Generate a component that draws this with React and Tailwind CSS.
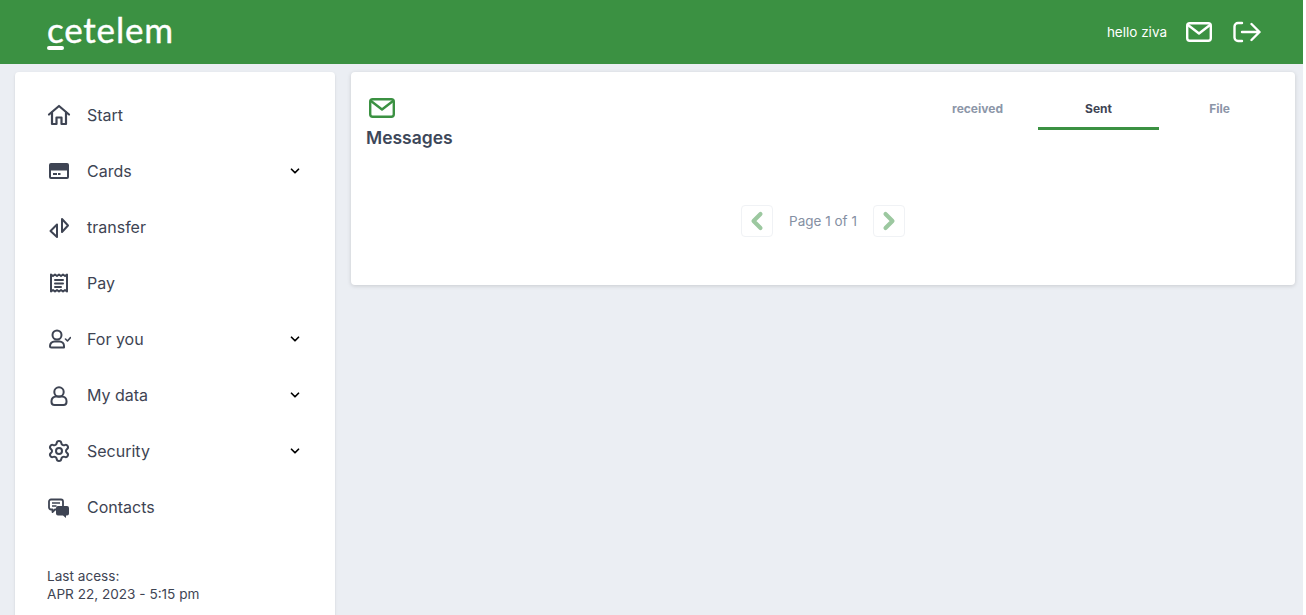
import { ChevronDown, ChevronLeft, ChevronRight, Settings } from "lucide-react";

const HouseIcon = () => (
  <svg viewBox="0 0 24 24" className="w-6 h-6" fill="none" stroke="currentColor" strokeWidth="2.2" strokeLinecap="round" strokeLinejoin="round">
    <path d="M2 11.5 12 3l10 8.5" />
    <path d="M5 9.5V21h4.5v-6.5h5V21H19V9.5" />
  </svg>
);

const CardIcon = () => (
  <svg viewBox="0 0 24 24" className="w-6 h-6" fill="currentColor">
    <path
      fillRule="evenodd"
      d="M4 4h16a2 2 0 0 1 2 2v12a2 2 0 0 1-2 2H4a2 2 0 0 1-2-2V6a2 2 0 0 1 2-2Zm0 7.5V18h16v-6.5H4Z"
    />
    <rect x="6" y="14" width="4" height="2" />
    <rect x="11" y="14" width="2.5" height="2" />
  </svg>
);

const TransferIcon = () => (
  <svg viewBox="0 0 24 24" className="w-6 h-6" fill="none" stroke="currentColor" strokeWidth="2" strokeLinejoin="round">
    <path d="M10 9.5 3.5 16l6.5 6Z" />
    <path d="M15 4l6 6.5-6 6.5Z" />
  </svg>
);

const ReceiptIcon = () => (
  <svg viewBox="0 0 24 24" className="w-6 h-6" fill="none" stroke="currentColor" strokeWidth="2" strokeLinecap="round" strokeLinejoin="round">
    <path d="M4 3.5 6 5l2-1.5L10 5l2-1.5L14 5l2-1.5L18 5l2-1.5v17L18 19l-2 1.5-2-1.5-2 1.5-2-1.5-2 1.5L6 19l-2 1.5Z" />
    <path d="M8 9h8M8 12.5h8M8 16h6" />
  </svg>
);

const UserCheckIcon = () => (
  <svg viewBox="0 0 24 24" className="w-6 h-6" fill="none" stroke="currentColor" strokeWidth="2" strokeLinecap="round" strokeLinejoin="round">
    <circle cx="10" cy="8" r="4.5" />
    <path d="M3 19a4.5 4.5 0 0 1 4.5-4.5h5A4.5 4.5 0 0 1 17 19v1.5H4.5A1.5 1.5 0 0 1 3 19Z" />
    <path d="M18.5 12l2 2 3-3.5" strokeWidth="1.6" />
  </svg>
);

const UserIcon = () => (
  <svg viewBox="0 0 24 24" className="w-6 h-6" fill="none" stroke="currentColor" strokeWidth="2" strokeLinecap="round" strokeLinejoin="round">
    <circle cx="12" cy="9" r="4.7" />
    <path d="M4.5 18a4.5 4.5 0 0 1 4.5-4.5h6a4.5 4.5 0 0 1 4.5 4.5v1a3 3 0 0 1-3 3h-9a3 3 0 0 1-3-3Z" />
  </svg>
);

const ChatIcon = () => (
  <svg viewBox="0 0 24 24" className="w-6 h-6">
    <path
      d="M4 4.5h10a2 2 0 0 1 2 2v6a2 2 0 0 1-2 2H8L5.5 17v-2.5H4a2 2 0 0 1-2-2v-6a2 2 0 0 1 2-2Z"
      fill="#fff"
      stroke="currentColor"
      strokeWidth="1.8"
      strokeLinejoin="round"
    />
    <path d="M5 8h8M5 11h4.5" stroke="currentColor" strokeWidth="1.6" />
    <path d="M11 11h9a2 2 0 0 1 2 2v5.5a2 2 0 0 1-2 2h-1V23l-3-2.5h-5a2 2 0 0 1-2-2V13a2 2 0 0 1 2-2Z" fill="currentColor" />
  </svg>
);

const MailIcon = ({ className }) => (
  <svg viewBox="0 0 26 20" className={className} fill="none" stroke="currentColor" strokeWidth="2.4" strokeLinejoin="round" strokeLinecap="round">
    <rect x="1.2" y="1.2" width="23.6" height="17.6" rx="2.5" />
    <path d="M2 3l11 8.5L24 3" />
  </svg>
);

const LogoutIcon = () => (
  <svg viewBox="0 0 28 22" className="w-7 h-[22px]" fill="none" stroke="currentColor" strokeWidth="2.4" strokeLinecap="round" strokeLinejoin="round">
    <path d="M9 2H5a3.5 3.5 0 0 0-3.5 3.5v11A3.5 3.5 0 0 0 5 20h4" />
    <path d="M9 11h17.5M18.5 3l8 8-8 8" />
  </svg>
);

const menu = [
  { label: "Start", icon: <HouseIcon /> },
  { label: "Cards", icon: <CardIcon />, arrow: true },
  { label: "transfer", icon: <TransferIcon /> },
  { label: "Pay", icon: <ReceiptIcon /> },
  { label: "For you", icon: <UserCheckIcon />, arrow: true },
  { label: "My data", icon: <UserIcon />, arrow: true },
  { label: "Security", icon: <Settings className="w-6 h-6" strokeWidth={2} />, arrow: true },
  { label: "Contacts", icon: <ChatIcon /> },
];

const App = () => {
  return (
    <div className="w-[1303px] h-[615px] overflow-hidden bg-[#ebeef3] font-['Inter',sans-serif] text-[#3e4453]">
      <header className="flex justify-between items-center h-16 pl-[47px] pr-[42px] bg-[#3b9142] text-white">
        <div className="relative h-12 w-[126px]">
          <span className="block -mt-px text-[35px] leading-[44px] font-['Lato',sans-serif] tracking-[0.8px] [-webkit-text-stroke:0.4px_white]">cetelem</span>
          <span className="absolute left-0 top-[38px] w-[17px] h-1 rounded-full bg-white"></span>
        </div>
        <div className="flex items-center">
          <span className="text-[13.5px] mr-[19px]">hello ziva</span>
          <MailIcon className="w-[26px] h-5 mr-[21px]" />
          <LogoutIcon />
        </div>
      </header>
      <div className="flex items-start gap-4 pl-[15px] pr-2 pt-2">
        <aside className="w-80 h-[560px] shrink-0 bg-white rounded pl-8 pr-[33px] pt-[15px] shadow-sm">
          <nav>
            {menu.map((item) => (
              <div key={item.label} className="flex items-center h-14">
                <span className="w-10 shrink-0">{item.icon}</span>
                <span className="flex-1 text-base">{item.label}</span>
                {item.arrow && <ChevronDown className="w-3.5 h-3.5 text-black" strokeWidth={3} />}
              </div>
            ))}
          </nav>
          <div className="mt-8 text-[13.6px] leading-[18px]">
            <div>Last acess:</div>
            <div>APR 22, 2023 - 5:15 pm</div>
          </div>
        </aside>
        <main className="flex-1 h-[213px] bg-white rounded px-[15px] shadow-[0_1px_4px_rgba(0,0,0,0.15)]">
          <div className="flex justify-between h-[94px]">
            <div className="pt-[26px]">
              <MailIcon className="w-[26px] h-5 ml-[3px] text-[#3b9142]" />
              <h1 className="mt-2 text-[17.5px] leading-6 font-semibold text-[#3d4759]">Messages</h1>
            </div>
            <div className="flex mt-[15px] h-[43px] text-xs font-bold">
              <div className="w-[121px] pt-[14px] text-center text-[#8c96a8]">received</div>
              <div className="w-[121px] pt-[14px] text-center border-b-[3px] border-[#3b9142]">Sent</div>
              <div className="w-[121px] pt-[14px] text-center text-[#8c96a8]">File</div>
            </div>
          </div>
          <div className="flex justify-center items-center gap-4 mt-[39px]">
            <button className="flex items-center justify-center w-8 h-8 rounded border border-[#f0f2f5] text-[#9cc8a0]">
              <ChevronLeft className="w-7 h-7" strokeWidth={3.5} />
            </button>
            <span className="text-[13.5px] text-[#8590a3]">Page 1 of 1</span>
            <button className="flex items-center justify-center w-8 h-8 rounded border border-[#f0f2f5] text-[#9cc8a0]">
              <ChevronRight className="w-7 h-7" strokeWidth={3.5} />
            </button>
          </div>
        </main>
      </div>
    </div>
  );
};

export default App;
